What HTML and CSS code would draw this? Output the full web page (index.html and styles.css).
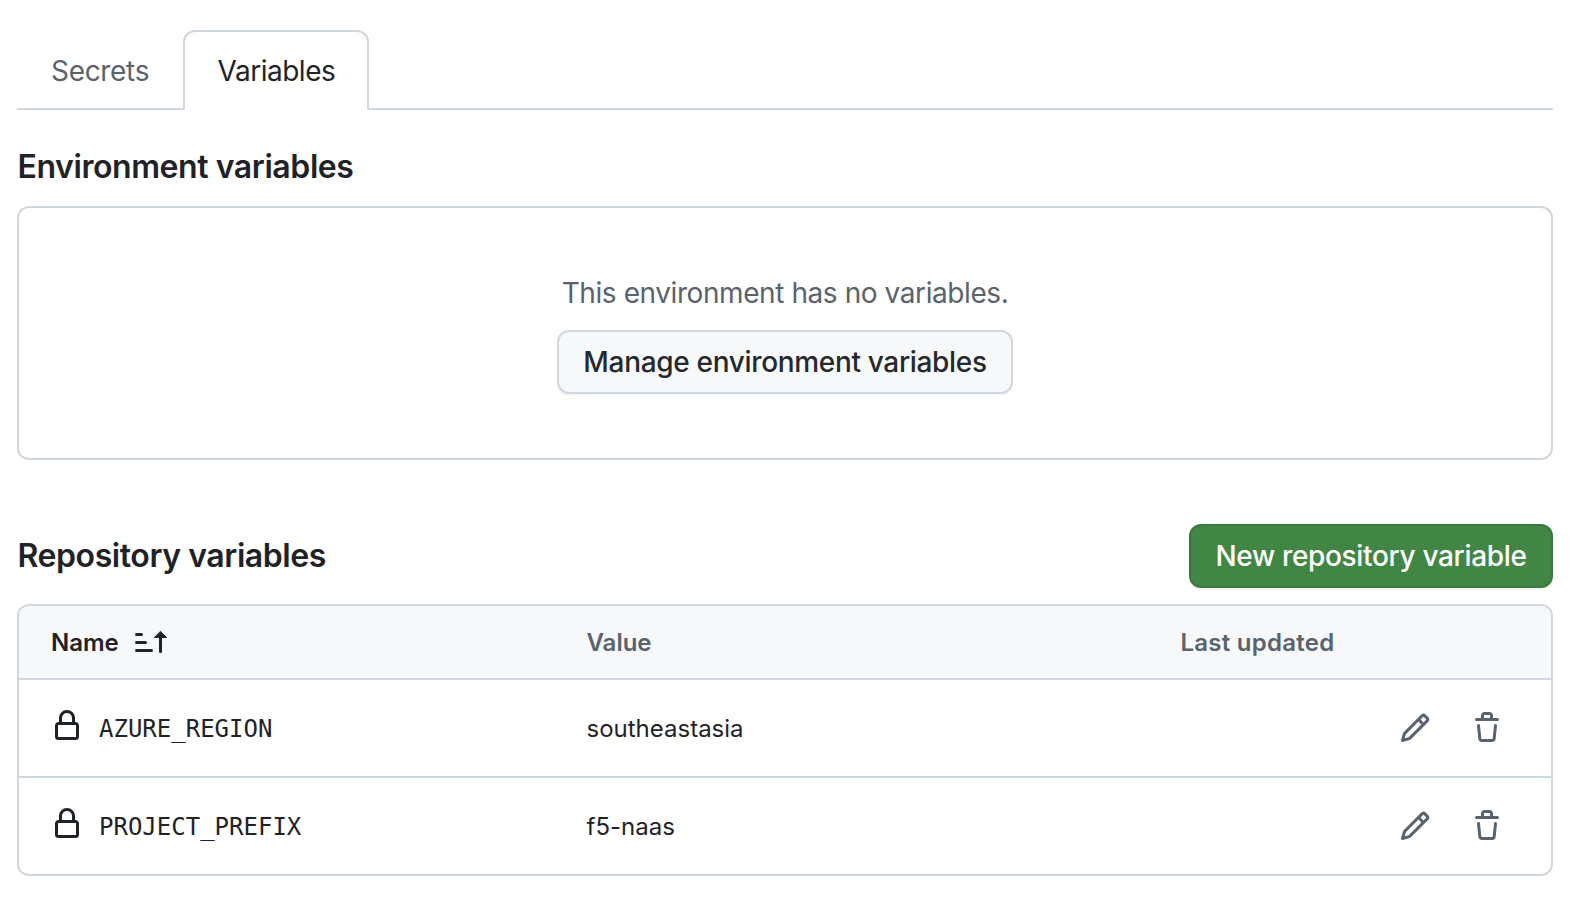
FILE: index.html
```html
<!DOCTYPE html>
<html lang="en">
<head>
<meta charset="utf-8">
<title>Actions variables</title>
<link rel="stylesheet" href="styles.css">
</head>
<body>
<svg class="sprite" aria-hidden="true">
  <symbol id="lock" viewBox="0 0 16 16"><path d="M4 4a4 4 0 0 1 8 0v2h.25c.966 0 1.75.784 1.75 1.75v5.5A1.75 1.75 0 0 1 12.25 15h-8.5A1.75 1.75 0 0 1 2 13.25v-5.5C2 6.784 2.784 6 3.75 6H4Zm8.25 3.5h-8.5a.25.25 0 0 0-.25.25v5.5c0 .138.112.25.25.25h8.5a.25.25 0 0 0 .25-.25v-5.5a.25.25 0 0 0-.25-.25ZM10.5 6V4a2.5 2.5 0 1 0-5 0v2Z"/></symbol>
  <symbol id="pencil" viewBox="0 0 16 16"><path d="M11.013 1.427a1.75 1.75 0 0 1 2.474 0l1.086 1.086a1.75 1.75 0 0 1 0 2.474l-8.61 8.61c-.21.21-.47.364-.756.445l-3.251.93a.75.75 0 0 1-.927-.928l.929-3.25c.081-.286.235-.547.445-.758l8.61-8.61Zm.176 4.823L9.75 4.81l-6.286 6.287a.253.253 0 0 0-.064.108l-.558 1.953 1.953-.558a.253.253 0 0 0 .108-.064Zm1.238-3.763a.25.25 0 0 0-.354 0L10.811 3.75l1.439 1.44 1.263-1.263a.25.25 0 0 0 0-.354Z"/></symbol>
  <symbol id="trash" viewBox="0 0 16 16"><path d="M11 1.75V3h2.25a.75.75 0 0 1 0 1.5H2.75a.75.75 0 0 1 0-1.5H5V1.75C5 .784 5.784 0 6.75 0h2.5C10.216 0 11 .784 11 1.75ZM4.496 6.675l.66 6.6a.25.25 0 0 0 .249.225h5.19a.25.25 0 0 0 .249-.225l.66-6.6a.75.75 0 0 1 1.492.149l-.66 6.6A1.748 1.748 0 0 1 10.595 15h-5.19a1.75 1.75 0 0 1-1.741-1.575l-.66-6.6a.75.75 0 1 1 1.492-.15ZM6.5 1.75V3h3V1.75a.25.25 0 0 0-.25-.25h-2.5a.25.25 0 0 0-.25.25Z"/></symbol>
  <symbol id="sort" viewBox="0 0 16 16"><path d="m12.927 2.573 3 3A.25.25 0 0 1 15.75 6H13.5v6.75a.75.75 0 0 1-1.5 0V6H9.75a.25.25 0 0 1-.177-.427l3-3a.25.25 0 0 1 .354 0ZM0 12.25a.75.75 0 0 1 .75-.75h7.5a.75.75 0 0 1 0 1.5H.75a.75.75 0 0 1-.75-.75Zm0-4a.75.75 0 0 1 .75-.75h4.5a.75.75 0 0 1 0 1.5H.75A.75.75 0 0 1 0 8.25Zm0-4a.75.75 0 0 1 .75-.75h2.5a.75.75 0 0 1 0 1.5H.75A.75.75 0 0 1 0 4.25Z"/></symbol>
</svg>
<main class="page">
  <nav class="tabs">
    <a class="tab tab-secrets"><span>Secrets</span></a>
    <a class="tab tab-active"><span>Variables</span></a>
  </nav>
  <h2 class="heading heading-env">Environment variables</h2>
  <section class="blank">
    <p class="blank-text">This environment has no variables.</p>
    <button class="btn btn-manage">Manage environment variables</button>
  </section>
  <header class="repo-head">
    <h2 class="heading heading-repo">Repository variables</h2>
    <button class="btn btn-new">New repository variable</button>
  </header>
  <section class="table">
    <div class="row row-head">
      <div class="name name-head"><span>Name</span><svg class="icon"><use href="#sort"/></svg></div>
      <div class="value-head">Value</div>
      <div class="updated">Last updated</div>
    </div>
    <div class="row">
      <div class="name"><svg class="icon icon-lock"><use href="#lock"/></svg><code class="code">AZURE_REGION</code></div>
      <div class="value">southeastasia</div>
      <div class="actions"><svg class="icon"><use href="#pencil"/></svg><svg class="icon"><use href="#trash"/></svg></div>
    </div>
    <div class="row">
      <div class="name"><svg class="icon icon-lock"><use href="#lock"/></svg><code class="code">PROJECT_PREFIX</code></div>
      <div class="value">f5-naas</div>
      <div class="actions"><svg class="icon"><use href="#pencil"/></svg><svg class="icon"><use href="#trash"/></svg></div>
    </div>
  </section>
</main>
</body>
</html>
```
FILE: styles.css
```css
* { box-sizing: border-box; }
body {
  margin: 0;
  background: #fff;
  color: #1f2328;
  font-family: Inter, "Liberation Sans", sans-serif;
  font-size: 28px;
}
.sprite { display: none; }
.icon { width: 32px; height: 32px; fill: currentColor; flex: none; display: block; }
.page { width: 1536px; margin-left: 17px; padding-top: 30px; }

.tabs { display: flex; height: 80px; border-bottom: 2px solid #d0d7de; letter-spacing: -0.48px; }
.tab { height: 80px; line-height: 42px; padding: 20px 33px; white-space: nowrap; }
.tab-secrets { width: 166px; padding-left: 34px; color: #59636e; letter-spacing: -0.32px; }
.tab-active {
  width: 186px;
  padding: 18px 0 0 32.5px;
  border: 2px solid #d0d7de;
  border-bottom: 0;
  border-radius: 12px 12px 0 0;
  background: #fff;
}

.heading { margin: 0; padding-left: 0.5px; font-size: 32px; font-weight: 600; line-height: 48px; letter-spacing: -0.42px; white-space: nowrap; }
.heading-env { margin-top: 33px; }

.blank {
  display: flex;
  flex-direction: column;
  align-items: center;
  height: 254px;
  margin-top: 15px;
  padding-top: 64px;
  border: 2px solid #d0d7de;
  border-radius: 12px;
}
.blank-text { margin: 0 0 16px; line-height: 42px; color: #59636e; letter-spacing: -0.42px; white-space: nowrap; }

.btn {
  height: 64px;
  padding: 0;
  border: 2px solid #d0d7de;
  border-radius: 12px;
  background: #f6f8fa;
  color: #25292e;
  font-family: inherit;
  font-size: 28px;
  font-weight: 500;
  line-height: 60px;
  letter-spacing: -0.33px;
  white-space: nowrap;
  box-shadow: 0 2px 0 rgba(31, 35, 40, 0.04);
}
.btn-manage { width: 456px; }
.btn-new { width: 364px; background: #428646; border-color: #3b783f; color: #fff; }

.repo-head { display: flex; justify-content: space-between; align-items: center; margin-top: 64px; }

.table { margin-top: 16px; border: 2px solid #d0d7de; border-radius: 12px; overflow: hidden; font-size: 24px; }
.row { display: grid; grid-template-columns: 535.5px 594px 1fr; align-items: center; height: 98px; padding-left: 32px; border-top: 2px solid #d0d7de; }
.row-head { height: 72px; border-top: 0; background: #f6f8fa; color: #59636e; font-weight: 600; }
.name { display: flex; align-items: center; gap: 16px; }
.name-head { color: #1f2328; }
.icon-lock { margin-top: -4px; }
.code { padding-top: 2px; font-family: "DejaVu Sans Mono", monospace; font-size: 24px; }
.updated { letter-spacing: 0.25px; }
.actions { display: flex; gap: 40px; padding-left: 218.5px; color: #59636e; }
```
